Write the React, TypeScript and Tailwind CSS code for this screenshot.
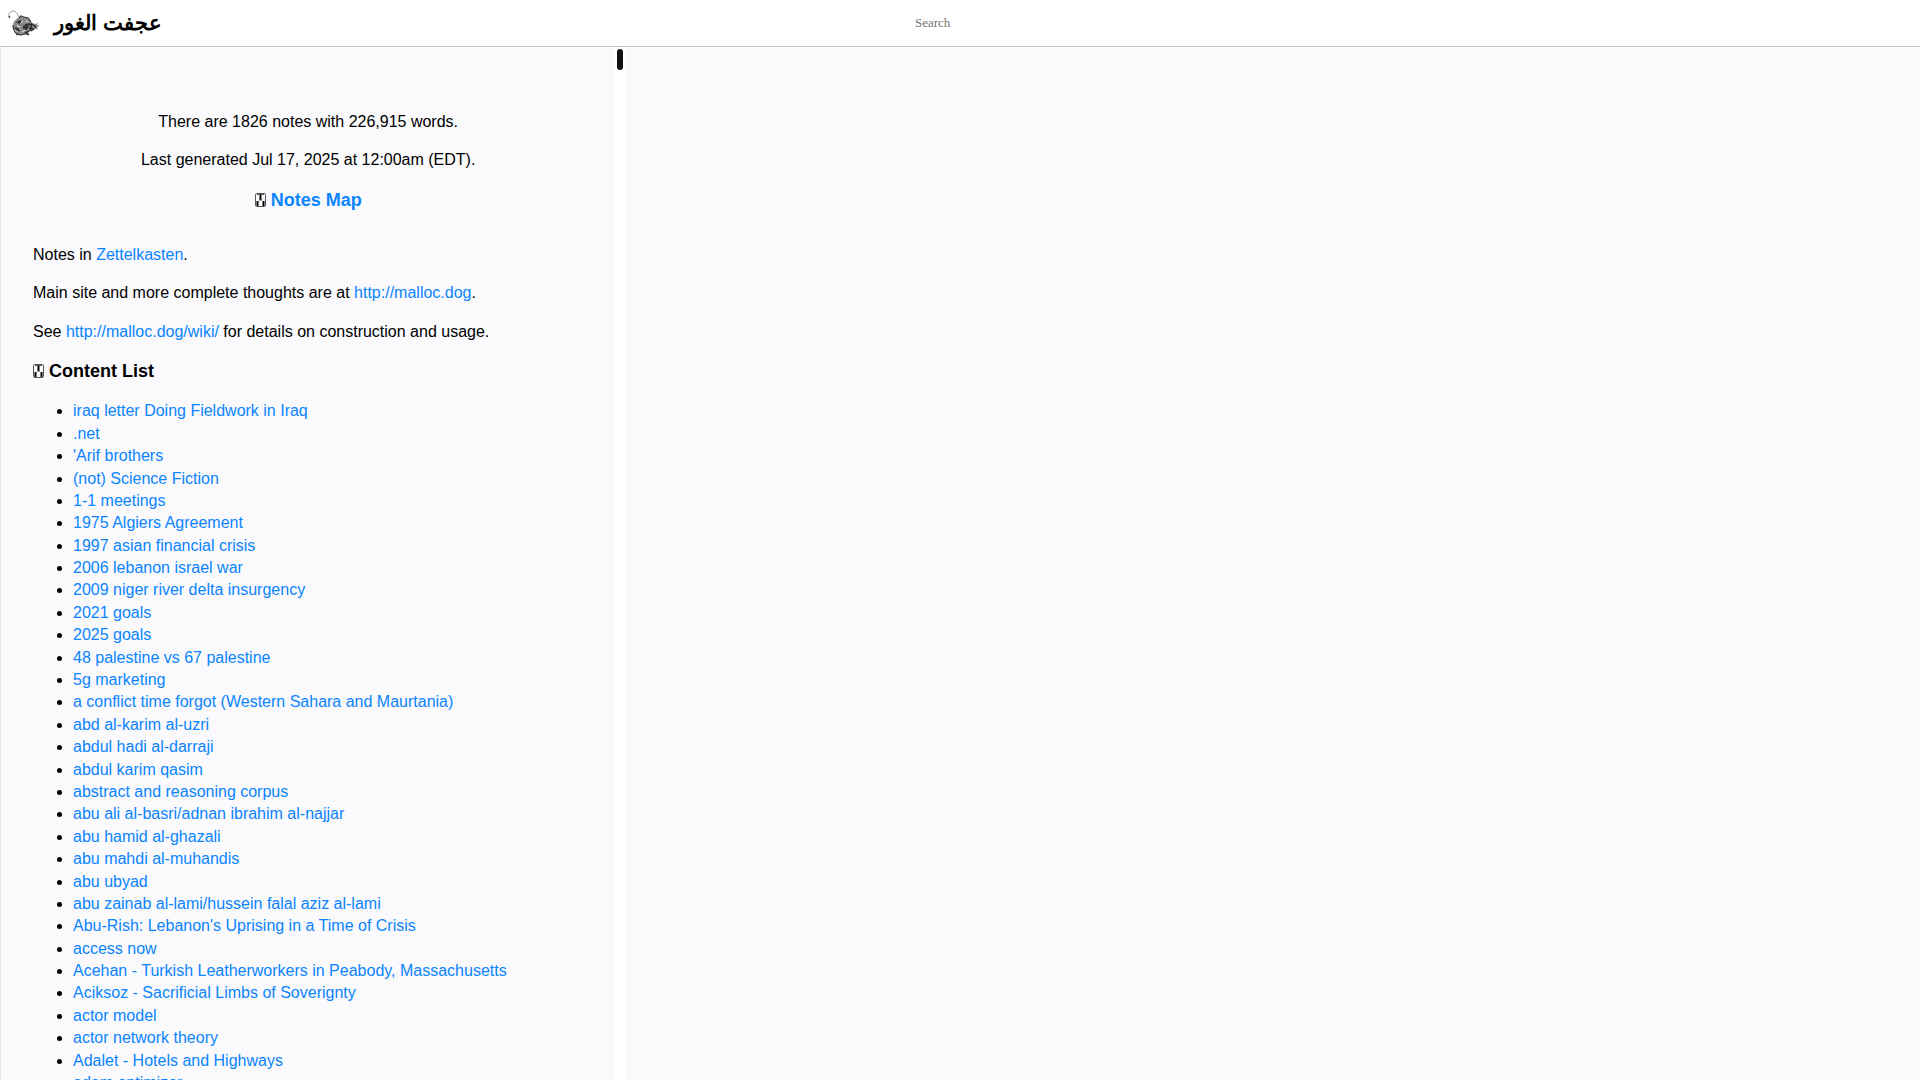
const notes = [
  "iraq letter Doing Fieldwork in Iraq",
  ".net",
  "'Arif brothers",
  "(not) Science Fiction",
  "1-1 meetings",
  "1975 Algiers Agreement",
  "1997 asian financial crisis",
  "2006 lebanon israel war",
  "2009 niger river delta insurgency",
  "2021 goals",
  "2025 goals",
  "48 palestine vs 67 palestine",
  "5g marketing",
  "a conflict time forgot (Western Sahara and Maurtania)",
  "abd al-karim al-uzri",
  "abdul hadi al-darraji",
  "abdul karim qasim",
  "abstract and reasoning corpus",
  "abu ali al-basri/adnan ibrahim al-najjar",
  "abu hamid al-ghazali",
  "abu mahdi al-muhandis",
  "abu ubyad",
  "abu zainab al-lami/hussein falal aziz al-lami",
  "Abu-Rish: Lebanon's Uprising in a Time of Crisis",
  "access now",
  "Acehan - Turkish Leatherworkers in Peabody, Massachusetts",
  "Aciksoz - Sacrificial Limbs of Soverignty",
  "actor model",
  "actor network theory",
  "Adalet - Hotels and Highways",
  "adam optimizer",
];

const link = "text-[#0a84ff] hover:underline";

// Anglerfish logo
const Fish = () => (
  <svg viewBox="0 0 34 28" className="h-7 w-[34px]" fill="none">
    <path d="M1 8C0 5 2 2 5 2c3 0 5 3 6 7" stroke="#888" strokeWidth="0.8" />
    <path d="M1 7l1 2" stroke="#333" strokeWidth="1.2" />
    <path
      d="M5 17c0-5 4-9 10-9 4 0 7 3 9 6l3 1 3-1-1 2 3 1-3 1 1 3-3-2-4 2c-2 3-6 5-10 5-5 0-8-4-8-9z"
      fill="#8a8a8a"
    />
    <path d="M11 9l2-2 3 1 4 1 3 4M5 16c0 6 3 10 8 10l7-2" stroke="#333" strokeWidth="1.2" />
    <path d="M8 13l4-2 2 2-3 2zM15 17l4-3 2 3-2 4-4-1zM6 18l4 1 2 3-3 1z" fill="#333" />
    <path d="M12 15l3-3M9 16l2 2 2-1M14 23l3-2M18 12l2 1M7 21l3 2" stroke="#eee" strokeWidth="1" />
    <path d="M20 15l6 1 2 3M21 19l5 1-3 2M17 24l4-2M24 14l-2 8" stroke="#222" strokeWidth="1.3" />
    <path d="M11 25l-3 1M18 25l3 1-1-2" stroke="#333" strokeWidth="1" />
    <circle cx="13" cy="16" r="1.2" fill="#ddd" stroke="#222" strokeWidth="0.6" />
  </svg>
);

const BoxIcon = () => (
  <svg viewBox="0 0 11 14" className="inline-block h-3.5 w-[11px] align-[-1px]" fill="none">
    <rect x="0.5" y="0.5" width="10" height="13" rx="1" stroke="#555" />
    <path d="M5.5 1v6M2.5 8v5M8.5 8v5" stroke="#000" strokeWidth="2" />
    <path d="M4 7h3M2 1.5h2M7 1.5h2" stroke="#555" />
  </svg>
);

export default function App() {
  return (
    <div className="flex h-screen flex-col overflow-hidden bg-white font-['Liberation_Sans',Arial,sans-serif] text-base leading-[1.4] text-black">
      <header className="flex h-[47px] shrink-0 items-center border-b border-[#c4c4c8]">
        <a href="#home" className="flex shrink-0 items-center gap-3 pl-2">
          <Fish />
          <h1 dir="rtl" className="font-['Liberation_Sans',sans-serif] text-[21px] font-bold">
            عجفت الغور
          </h1>
        </a>
        <div className="flex flex-1 justify-center">
          <input
            type="search"
            aria-label="Search"
            placeholder="Search"
            className="w-[252px] bg-transparent font-['Liberation_Serif',serif] text-[13px] outline-none placeholder:text-[#757575]"
          />
        </div>
      </header>

      <div className="flex min-h-0 flex-1">
        <main className="w-[32.05%] shrink-0 overflow-hidden border-l border-[#e8e8ec] bg-[#fafafc] px-8 pt-16">
          <div className="flex flex-col gap-4 text-center">
            <p>There are 1826 notes with 226,915 words.</p>
            <p>Last generated Jul 17, 2025 at 12:00am (EDT).</p>
            <h2 className="text-lg leading-[1.4] font-bold">
              <BoxIcon />{" "}
              <a href="#map" className={link}>
                Notes Map
              </a>
            </h2>
          </div>

          <div className="mt-[31px] flex flex-col gap-4">
            <p>
              Notes in{" "}
              <a href="#zettelkasten" className={link}>
                Zettelkasten
              </a>
              .
            </p>
            <p>
              Main site and more complete thoughts are at{" "}
              <a href="http://malloc.dog" className={link}>
                http://malloc.dog
              </a>
              .
            </p>
            <p>
              See{" "}
              <a href="http://malloc.dog/wiki/" className={link}>
                http://malloc.dog/wiki/
              </a>{" "}
              for details on construction and usage.
            </p>
            <h2 className="text-lg leading-[1.4] font-bold">
              <BoxIcon /> Content List
            </h2>
            <ul className="list-disc pl-10">
              {notes.map((note) => (
                <li key={note}>
                  <a href={`#${encodeURIComponent(note)}`} className={link}>
                    {note}
                  </a>
                </li>
              ))}
            </ul>
          </div>
        </main>

        {/* Drag handle between the panes */}
        <div className="w-[10px] shrink-0 cursor-col-resize px-0.5 pt-0.5">
          <div className="h-[21px] rounded-full bg-[#111]" />
        </div>

        <section aria-label="Note" className="flex-1 bg-[#fafafc]" />
      </div>
    </div>
  );
}
